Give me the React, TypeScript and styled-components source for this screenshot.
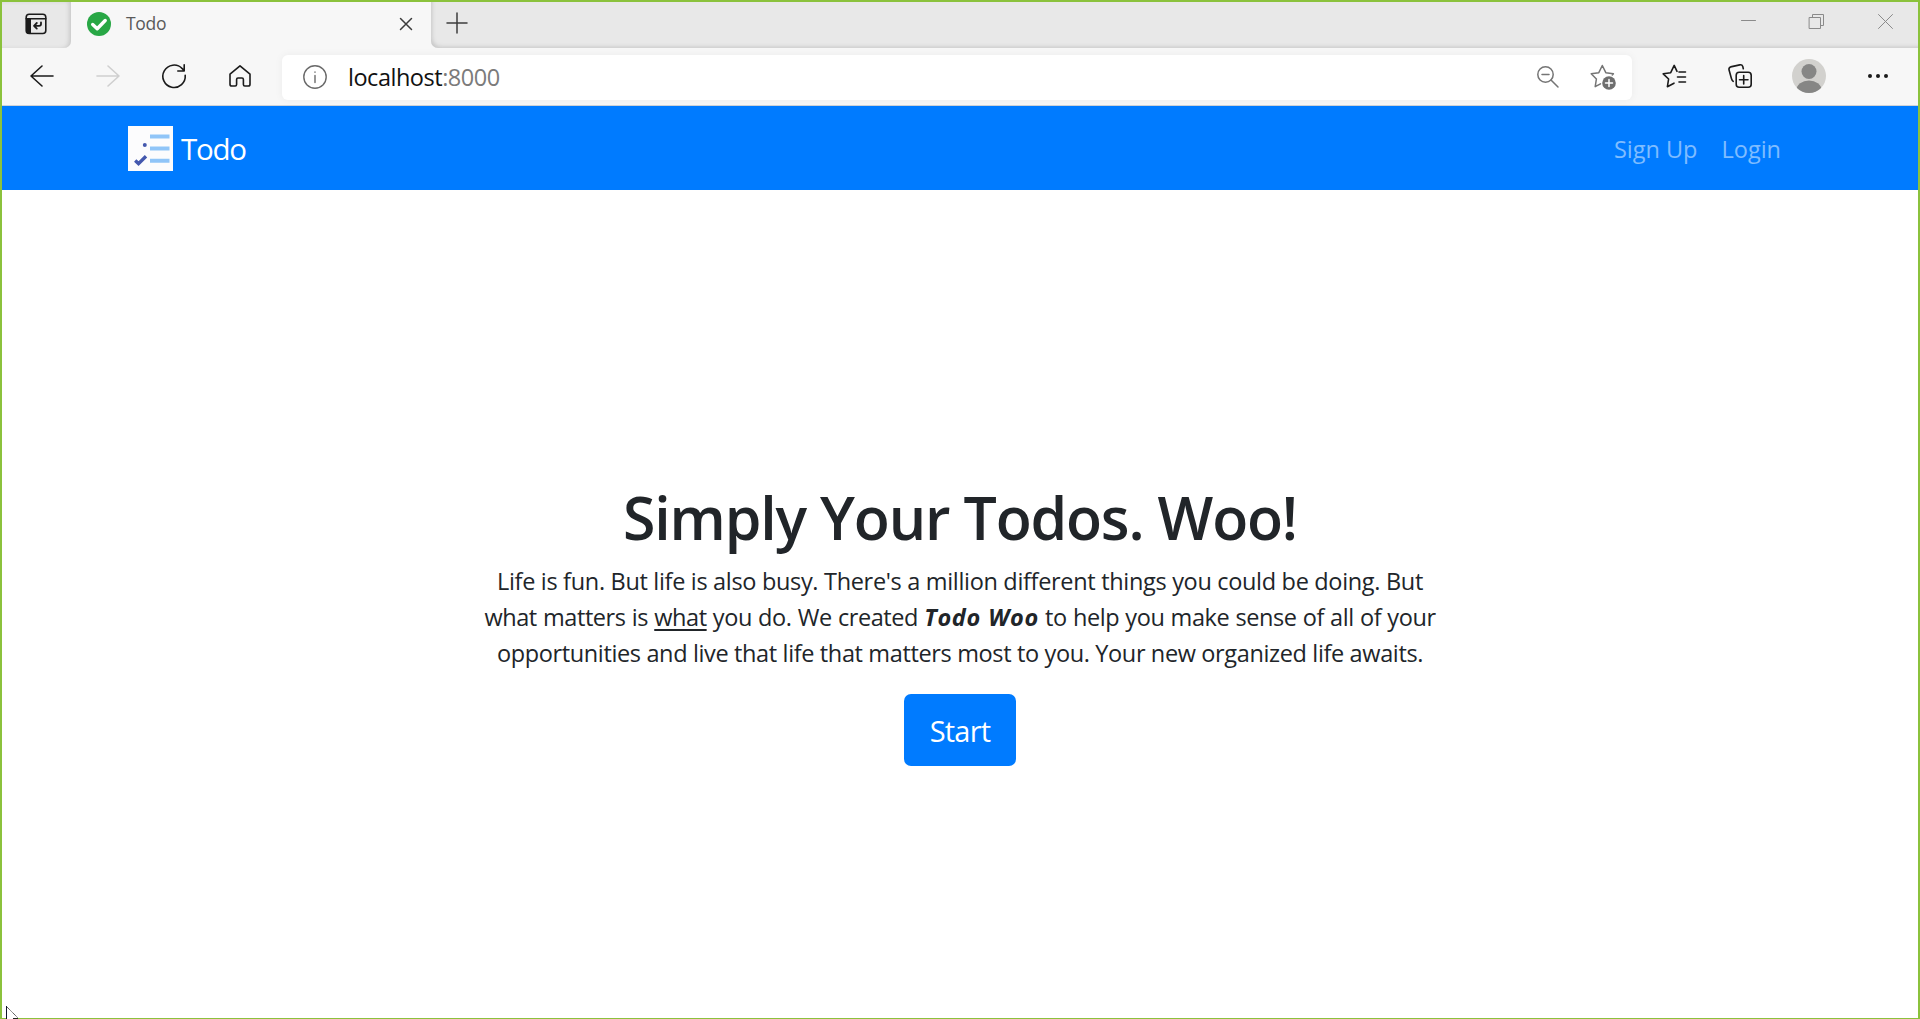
import React from "react";
import styled, { createGlobalStyle } from "styled-components";

const GlobalStyle = createGlobalStyle`
  * { box-sizing: border-box; }
  body { margin: 0; background: #fff; overflow: hidden; font-family: "Open Sans", "Noto Sans", sans-serif; }
  svg { display: block; overflow: visible; }
`;

const Window = styled.div`
  height: 1019px;
  display: flex;
  flex-direction: column;
  border: 2px solid #8bc23c;
  border-bottom-width: 1px;
  background: #fff;
  position: relative;
`;

const TabStrip = styled.div`
  flex: none;
  height: 46px;
  display: flex;
  background: #f7f7f7;
`;

const StripStart = styled.div`
  width: 69px;
  background: #e8e8e8;
  border-bottom-right-radius: 7px;
  box-shadow: inset -3px 0 4px -1px #c9c9c9;
  padding: 11px 0 0 23px;
`;

const Tab = styled.div`
  width: 360px;
  display: flex;
  align-items: center;
  padding: 0 19px 2px 16px;
`;

const TabTitle = styled.span`
  flex: 1;
  margin: 0 0 2px 15px;
  font-size: 17.5px;
  line-height: 24px;
  color: #5a5a5a;
  letter-spacing: -0.3px;
`;

const StripEnd = styled.div`
  flex: 1;
  display: flex;
  background: #e8e8e8;
  border-bottom-left-radius: 7px;
  box-shadow: inset 3px -3px 4px -2px #c6c6c6;
  padding: 10px 25px 0 15px;
`;

const WindowControls = styled.div`
  display: flex;
  gap: 53px;
  margin-left: auto;
  padding-top: 2px;

  > :last-child {
    margin-left: 1px;
  }
`;

const Toolbar = styled.div`
  flex: none;
  height: 58px;
  display: flex;
  align-items: center;
  padding: 0 7px;
  background: #f7f7f7;
  border-bottom: 1px solid #cfd3d8;
`;

const ToolSlot = styled.div<{ $width?: number }>`
  flex: none;
  width: ${(p) => p.$width ?? 66}px;
  margin-bottom: 2px;
  display: flex;
  justify-content: center;
`;

const AddressBar = styled.div`
  flex: 1;
  height: 45px;
  margin: 1px 9px 0;
  padding: 0 16px 0 21px;
  display: flex;
  align-items: center;
  gap: 21px;
  border-radius: 6px;
  background: #fff;
  box-shadow: 0 0 8px rgba(0, 0, 0, 0.05);
`;

const Address = styled.span`
  flex: 1;
  font-size: 23.5px;
  line-height: 32px;
  color: #111;
  letter-spacing: -0.48px;
`;

const Port = styled.span`
  color: #7b7b7b;
`;

const AddressActions = styled.div`
  display: flex;
  align-items: center;
  gap: 31px;
`;

const Navbar = styled.nav`
  flex: none;
  height: 84px;
  display: flex;
  align-items: center;
  padding: 0 137px 0 126px;
  background: #007bff;
`;

const Brand = styled.a`
  display: flex;
  align-items: center;
  gap: 8px;
  color: #fff;
  font-size: 29.5px;
  line-height: 45px;
  letter-spacing: -1.3px;
`;

const NavLinks = styled.div`
  margin-left: auto;
  padding-top: 2px;
  display: flex;
  gap: 24px;
`;

const NavLink = styled.a`
  color: rgba(255, 255, 255, 0.5);
  font-size: 23.5px;
  line-height: 36px;
`;

const Hero = styled.main`
  flex: 1;
  display: flex;
  flex-direction: column;
  align-items: center;
  padding-top: 291px;
  color: #212529;
`;

const Title = styled.h1`
  margin: 0 0 10px;
  font-size: 59px;
  font-weight: 550;
  line-height: 72px;
  letter-spacing: -1.17px;
  white-space: nowrap;
`;

const Intro = styled.p`
  margin: 0 0 23px;
  display: flex;
  flex-direction: column;
  align-items: center;
  font-size: 23.5px;
  line-height: 36px;
`;

const Line = styled.span<{ $spacing: number; $words?: number }>`
  white-space: nowrap;
  letter-spacing: ${(p) => p.$spacing}px;
  word-spacing: ${(p) => p.$words ?? 0}px;
`;

const Underlined = styled.u`
  text-decoration-thickness: 2px;
  text-underline-offset: 3px;
  text-decoration-skip-ink: none;
`;

const Product = styled.strong`
  font-style: italic;
  font-weight: 700;
  letter-spacing: 0.7px;
`;

const StartButton = styled.button`
  width: 112px;
  height: 72px;
  padding: 0;
  border: 0;
  border-radius: 7px;
  background: #007bff;
  color: #fff;
  font-family: inherit;
  font-size: 29px;
  line-height: 45px;
  letter-spacing: -0.8px;
`;

const Cursor = styled.svg`
  position: absolute;
  left: 4px;
  top: 1004px;
`;

type GlyphProps = { w: number; h: number; color?: string; sw?: number; children: React.ReactNode };
const Glyph = ({ w, h, color = "#1b1b1b", sw = 1.6, children }: GlyphProps) => (
  <svg width={w} height={h} viewBox={`0 0 ${w} ${h}`} fill="none" stroke={color} strokeWidth={sw} strokeLinecap="round" strokeLinejoin="round">
    {children}
  </svg>
);

export default function App() {
  return (
    <>
      <GlobalStyle />
      <Window>
        <TabStrip>
          <StripStart>
            <Glyph w={22} h={22}>
              <rect x="1.2" y="1.2" width="19.6" height="19.3" rx="3" />
              <path d="M1.2 5.8H20.8" />
              <path d="M1 6H6V20.7H3.2Q1 20.7 1 18Z" fill="#1b1b1b" stroke="none" />
              <path d="M16 9.5V11Q16 12.8 14 12.8H9M11.8 10L9 12.8L11.8 15.6" strokeWidth="1.8" />
            </Glyph>
          </StripStart>
          <Tab>
            <svg width="24" height="24" viewBox="0 0 24 24">
              <circle cx="12" cy="12" r="12" fill="#28a745" />
              <path d="M5.7 12.5L10.2 16.7L18.2 8.5" fill="none" stroke="#fff" strokeWidth="3.4" strokeLinecap="round" strokeLinejoin="round" />
            </svg>
            <TabTitle>Todo</TabTitle>
            <Glyph w={12} h={12} color="#3c3c3c" sw={1.5}>
              <path d="M.5.5L11.5 11.5M11.5.5L.5 11.5" />
            </Glyph>
          </Tab>
          <StripEnd>
            <Glyph w={22} h={22} color="#3c3c3c" sw={1.5}>
              <path d="M11 1V21M1 11H21" />
            </Glyph>
            <WindowControls>
              <Glyph w={15} h={15} color="#8a8a8a" sw={1}><path d="M.5 6.5H14.5" /></Glyph>
              <Glyph w={15} h={15} color="#8a8a8a" sw={1}>
                <path d="M.5 3.5H11.5V14.5H.5ZM3.5 3.5V.5H14.5V11.5H11.5" />
              </Glyph>
              <Glyph w={15} h={15} color="#8a8a8a" sw={1}><path d="M.5.5L14.5 14.5M14.5.5L.5 14.5" /></Glyph>
            </WindowControls>
          </StripEnd>
        </TabStrip>

        <Toolbar>
          <ToolSlot><Glyph w={24} h={22}><path d="M23 11H1M12 1L1 11L12 21" /></Glyph></ToolSlot>
          <ToolSlot><Glyph w={24} h={22} color="#cfcfcf"><path d="M1 11H23M12 1L23 11L12 21" /></Glyph></ToolSlot>
          <ToolSlot>
            <Glyph w={24} h={24}><path d="M23.2 11.2A11.2 11.2 0 1 1 20.2 4.6L22 6.8M22.2 .8V7H15.8" /></Glyph>
          </ToolSlot>
          <ToolSlot>
            <Glyph w={22} h={22}>
              <path d="M1 9.2L11 .8L21 9.2V19.2Q21 21 19.2 21H15.8Q14.4 21 14.4 19.5V14.5Q14.4 13 13 13H9Q7.6 13 7.6 14.5V19.5Q7.6 21 6.2 21H2.8Q1 21 1 19.2Z" />
            </Glyph>
          </ToolSlot>
          <AddressBar>
            <Glyph w={24} h={24} color="#6a6a6a" sw={1.4}>
              <circle cx="12" cy="12" r="11.2" />
              <path d="M12 10.5V17.5M12 7V7.3" />
            </Glyph>
            <Address>localhost<Port>:8000</Port></Address>
            <AddressActions>
              <Glyph w={22} h={22} color="#757575" sw={1.5}>
                <circle cx="8.5" cy="8.5" r="7.7" />
                <path d="M14 14L21 21M5 8.5H12" />
              </Glyph>
              <Glyph w={26} h={26} color="#757575" sw={1.5}>
                <path d="M10.5 19.8L5.2 22.7L6.4 15L1.2 9.8L8.8 8.7L12.3 1.5L15.8 8.7L23.4 9.8L22.3 11" />
                <circle cx="19" cy="19" r="6.8" fill="#6e6e6e" stroke="none" />
                <path d="M19 15.5V22.5M15.5 19H22.5" stroke="#fff" />
              </Glyph>
            </AddressActions>
          </AddressBar>
          <ToolSlot>
            <Glyph w={24} h={24}>
              <path d="M12 19.2L5.4 22.7L6.6 15L1.2 9.8L8.7 8.7L12.2 1.4L15 7.3M17 8H23.5M15.5 13H23.5M17 18H23.5" />
            </Glyph>
          </ToolSlot>
          <ToolSlot>
            <Glyph w={24} h={24}>
              <rect x="8.2" y="8.2" width="15" height="15" rx="3" />
              <path d="M15.7 11.5V20M11.5 15.7H20M5.2 17.3Q4 16.5 3.5 14.8L1 5.8Q.6 3.6 2.6 2.9L11.8.9Q14 .4 14.8 2.6L15.3 4.8" />
            </Glyph>
          </ToolSlot>
          <ToolSlot $width={72}>
            <svg width="34" height="34" viewBox="0 0 34 34">
              <clipPath id="avatar"><circle cx="17" cy="17" r="17" /></clipPath>
              <g clipPath="url(#avatar)">
                <rect width="34" height="34" fill="#d2d1ce" />
                <circle cx="17" cy="12.5" r="7.5" fill="#868685" />
                <ellipse cx="17" cy="31" rx="12.5" ry="9.5" fill="#868685" />
              </g>
            </svg>
          </ToolSlot>
          <ToolSlot>
            <svg width="20" height="4" viewBox="0 0 20 4" fill="#1b1b1b">
              <circle cx="2" cy="2" r="2" /><circle cx="10" cy="2" r="2" /><circle cx="18" cy="2" r="2" />
            </svg>
          </ToolSlot>
        </Toolbar>

        <Navbar>
          <Brand>
            <svg width="45" height="45" viewBox="0 0 45 45">
              <rect width="45" height="45" fill="#fcfcfd" />
              <path d="M22 10.5H41.5M22 22.5H41.5M22 34.8H41.5" stroke="#90c5f8" strokeWidth="4" />
              <circle cx="16.8" cy="19" r="2" fill="#4458ae" />
              <path d="M7.2 34.6L10.5 37.6L18 30.3" fill="none" stroke="#4458ae" strokeWidth="3.4" />
            </svg>
            Todo
          </Brand>
          <NavLinks>
            <NavLink>Sign Up</NavLink>
            <NavLink>Login</NavLink>
          </NavLinks>
        </Navbar>

        <Hero>
          <Title>Simply Your Todos. Woo!</Title>
          <Intro>
            <Line $spacing={-0.32}>Life is fun. But life is also busy. There's a million different things you could be doing. But</Line>
            <Line $spacing={-0.42} $words={0.5}>
              what matters is <Underlined>what</Underlined> you do. We created <Product>Todo Woo</Product> to help you make sense of all of your
            </Line>
            <Line $spacing={-0.36}>opportunities and live that life that matters most to you. Your new organized life awaits.</Line>
          </Intro>
          <StartButton>Start</StartButton>
        </Hero>

        <Cursor width="13" height="13" viewBox="0 0 13 13">
          <path d="M.5 0V13H11.5L.5 1.5" fill="#fff" />
          <path d="M.5 0V13" stroke="#10142a" strokeWidth="1" />
          <path d="M1 1L12 12" stroke="#222" strokeWidth="1" strokeDasharray="1 .7" />
          <path d="M7 12.5H12" stroke="#222" />
        </Cursor>
      </Window>
    </>
  );
}
